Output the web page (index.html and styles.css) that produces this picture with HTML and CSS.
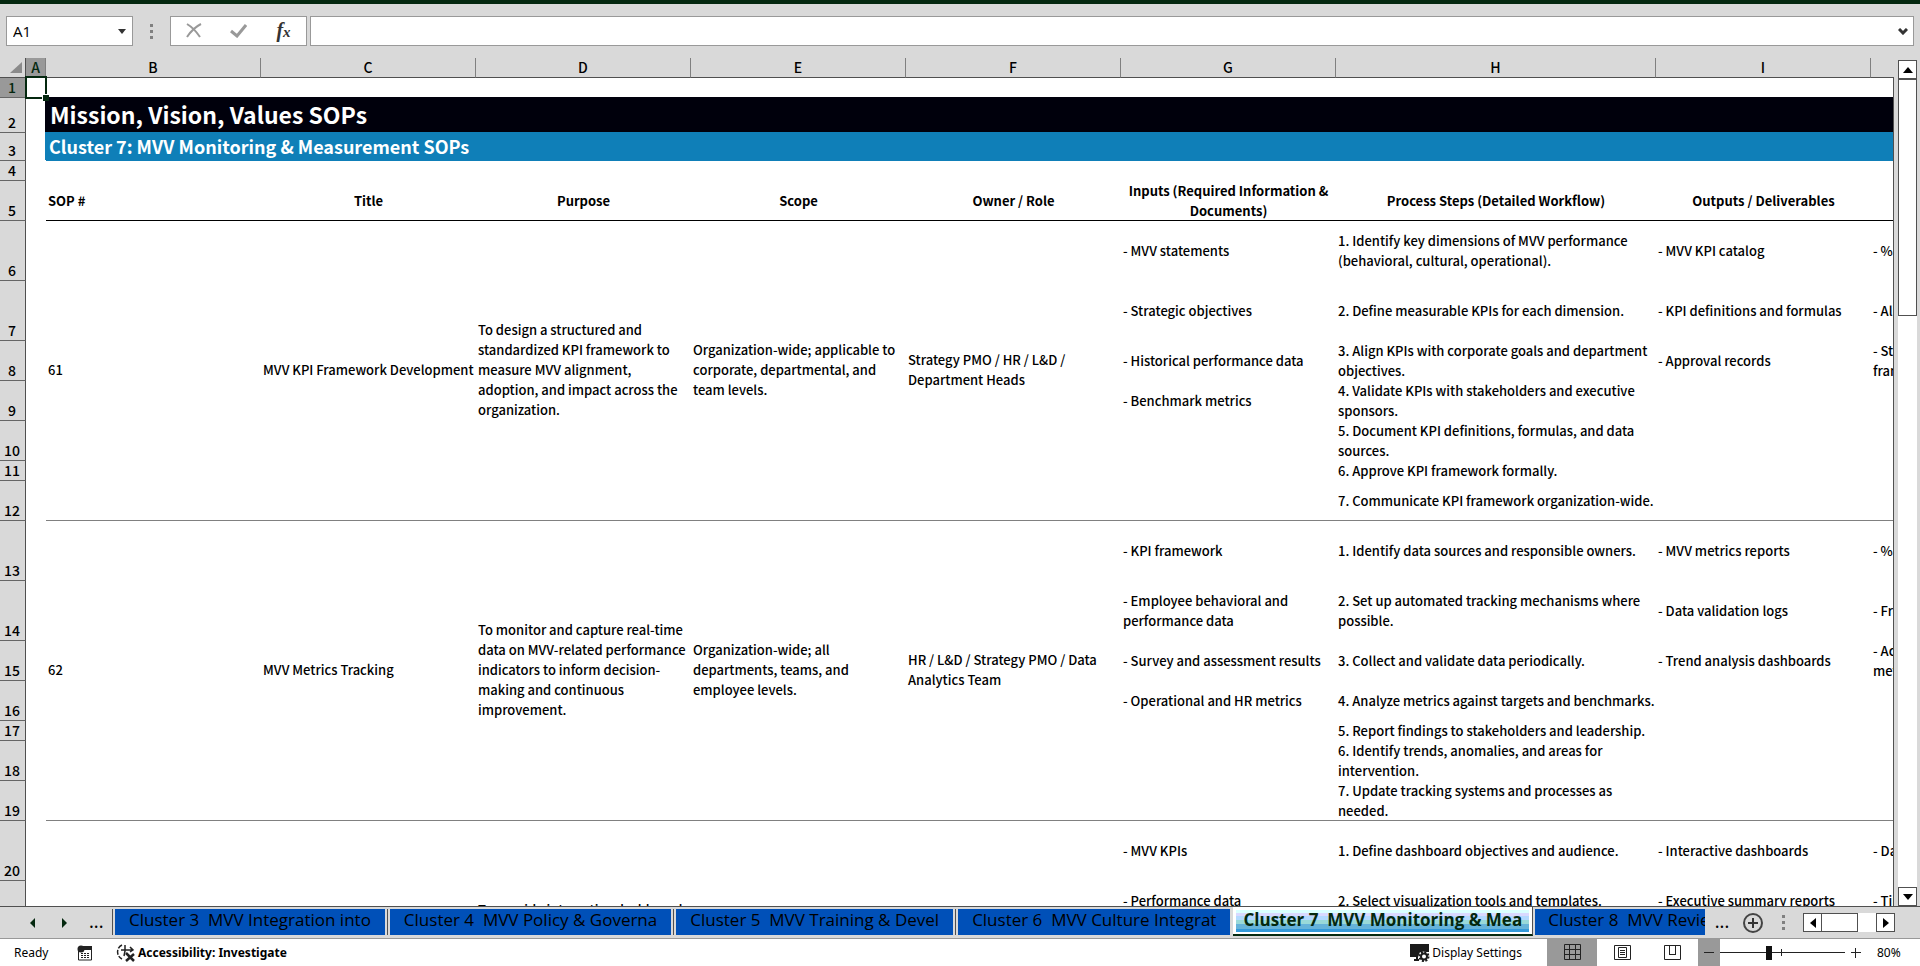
FILE: index.html
```html
<!DOCTYPE html>
<html lang="en">
<head>
    <meta charset="UTF-8">
    <meta name="viewport" content="width=device-width, initial-scale=1.0">
    <title>Mission, Vision, Values SOPs</title>
    <link rel="stylesheet" href="styles.css">
</head>
<body>
    <header class="title-strip"></header>

    <!-- Formula bar -->
    <div class="formula-bar">
        <div class="name-box">
            <input type="text" class="name-input" value="A1" aria-label="Name box">
            <button class="drop-btn" aria-label="Open name list">
                <svg width="8" height="5" viewBox="0 0 8 5"><path d="M0 0h8L4 5z" fill="#333"/></svg>
            </button>
        </div>
        <span class="grip"><i></i><i></i><i></i></span>
        <div class="formula-actions">
            <button aria-label="Cancel">
                <svg width="16" height="16" viewBox="0 0 16 16"><path d="M1 1c5 3 9 7 13 13M15 1C9 4 5 8 1 14" fill="none" stroke="#999" stroke-width="2"/></svg>
            </button>
            <button aria-label="Enter">
                <svg width="17" height="14" viewBox="0 0 17 14"><path d="M1 7l6 5L16 1" fill="none" stroke="#999" stroke-width="3"/></svg>
            </button>
            <button class="fx" aria-label="Insert function">f<small>x</small></button>
        </div>
        <div class="formula-field">
            <input type="text" class="formula-input" aria-label="Formula">
            <button class="drop-btn" aria-label="Expand formula bar">
                <svg width="10" height="7" viewBox="0 0 10 7"><path d="M1 1l4 4 4-4" fill="none" stroke="#333" stroke-width="3"/></svg>
            </button>
        </div>
    </div>

    <!-- Worksheet -->
    <main class="sheet-area">
        <div class="sheet">
            <table class="grid">
                <colgroup>
                    <col class="col-num"><col class="col-a"><col class="col-std"><col class="col-std"><col class="col-std"><col class="col-std"><col class="col-std"><col class="col-std"><col class="col-wide"><col class="col-std"><col class="col-std">
                </colgroup>
                <thead>
                    <tr>
                        <th class="corner"><svg width="12" height="11" viewBox="0 0 12 11"><path d="M12 0v11H0z" fill="#8a8a8a"/></svg></th>
                        <th class="active">A</th><th>B</th><th>C</th><th>D</th><th>E</th><th>F</th><th>G</th><th>H</th><th>I</th><th>J</th>
                    </tr>
                </thead>
                <tbody>
                    <tr class="h20"><th class="active">1</th><td class="selected"><span class="cursor"></span></td><td colspan="9"></td></tr>
                    <tr class="h35"><th>2</th><td></td><td colspan="9" class="title">Mission, Vision, Values SOPs</td></tr>
                    <tr class="h28"><th>3</th><td></td><td colspan="9" class="subtitle">Cluster 7: MVV Monitoring &amp; Measurement SOPs</td></tr>
                    <tr class="h20"><th>4</th><td></td><td colspan="9"></td></tr>
                    <tr class="h40 heads">
                        <th>5</th><td></td>
                        <td class="left">SOP #</td>
                        <td>Title</td>
                        <td>Purpose</td>
                        <td>Scope</td>
                        <td>Owner / Role</td>
                        <td>Inputs (Required Information &amp;<br>Documents)</td>
                        <td>Process Steps (Detailed Workflow)</td>
                        <td>Outputs / Deliverables</td>
                        <td></td>
                    </tr>

                    <tr class="h60">
                        <th>6</th><td></td>
                        <td rowspan="7" class="end">61</td>
                        <td rowspan="7" class="end">MVV KPI Framework Development</td>
                        <td rowspan="7" class="end">To design a structured and<br>standardized KPI framework to<br>measure MVV alignment,<br>adoption, and impact across the<br>organization.</td>
                        <td rowspan="7" class="end">Organization-wide; applicable to<br>corporate, departmental, and<br>team levels.</td>
                        <td rowspan="7" class="end">Strategy PMO / HR / L&amp;D /<br>Department Heads</td>
                        <td>- MVV statements</td>
                        <td>1. Identify key dimensions of MVV performance<br>(behavioral, cultural, operational).</td>
                        <td>- MVV KPI catalog</td>
                        <td>- % of KPIs aligned</td>
                    </tr>
                    <tr class="h60"><th>7</th><td></td><td>- Strategic objectives</td><td>2. Define measurable KPIs for each dimension.</td><td>- KPI definitions and formulas</td><td>- Alignment score</td></tr>
                    <tr class="h40"><th>8</th><td></td><td>- Historical performance data</td><td>3. Align KPIs with corporate goals and department<br>objectives.</td><td>- Approval records</td><td>- Stakeholder approval of<br>framework</td></tr>
                    <tr class="h40"><th>9</th><td></td><td>- Benchmark metrics</td><td>4. Validate KPIs with stakeholders and executive<br>sponsors.</td><td></td><td></td></tr>
                    <tr class="h40"><th>10</th><td></td><td></td><td>5. Document KPI definitions, formulas, and data<br>sources.</td><td></td><td></td></tr>
                    <tr class="h20"><th>11</th><td></td><td></td><td>6. Approve KPI framework formally.</td><td></td><td></td></tr>
                    <tr class="h40 last"><th>12</th><td></td><td></td><td>7. Communicate KPI framework organization-wide.</td><td></td><td></td></tr>

                    <tr class="h60">
                        <th>13</th><td></td>
                        <td rowspan="7" class="end">62</td>
                        <td rowspan="7" class="end">MVV Metrics Tracking</td>
                        <td rowspan="7" class="end">To monitor and capture real-time<br>data on MVV-related performance<br>indicators to inform decision-<br>making and continuous<br>improvement.</td>
                        <td rowspan="7" class="end">Organization-wide; all<br>departments, teams, and<br>employee levels.</td>
                        <td rowspan="7" class="end">HR / L&amp;D / Strategy PMO / Data<br>Analytics Team</td>
                        <td>- KPI framework</td>
                        <td>1. Identify data sources and responsible owners.</td>
                        <td>- MVV metrics reports</td>
                        <td>- % of metrics captured</td>
                    </tr>
                    <tr class="h60"><th>14</th><td></td><td>- Employee behavioral and<br>performance data</td><td>2. Set up automated tracking mechanisms where<br>possible.</td><td>- Data validation logs</td><td>- Frequency of updates</td></tr>
                    <tr class="h40"><th>15</th><td></td><td>- Survey and assessment results</td><td>3. Collect and validate data periodically.</td><td>- Trend analysis dashboards</td><td>- Accuracy of reported<br>metrics</td></tr>
                    <tr class="h40"><th>16</th><td></td><td>- Operational and HR metrics</td><td>4. Analyze metrics against targets and benchmarks.</td><td></td><td></td></tr>
                    <tr class="h20"><th>17</th><td></td><td></td><td>5. Report findings to stakeholders and leadership.</td><td></td><td></td></tr>
                    <tr class="h40"><th>18</th><td></td><td></td><td>6. Identify trends, anomalies, and areas for<br>intervention.</td><td></td><td></td></tr>
                    <tr class="h40 last"><th>19</th><td></td><td></td><td>7. Update tracking systems and processes as<br>needed.</td><td></td><td></td></tr>

                    <tr class="h60">
                        <th>20</th><td></td>
                        <td rowspan="7" class="end">63</td>
                        <td rowspan="7" class="end">MVV Dashboards</td>
                        <td rowspan="7" class="end">To provide interactive dashboards<br>that give leaders and teams a<br>clear view of MVV performance,<br>highlight areas that need<br>attention, and support timely<br>decisions across the<br>organization.</td>
                        <td rowspan="7" class="end">Organization-wide.</td>
                        <td rowspan="7" class="end">Strategy PMO</td>
                        <td>- MVV KPIs</td>
                        <td>1. Define dashboard objectives and audience.</td>
                        <td>- Interactive dashboards</td>
                        <td>- Dashboard usage</td>
                    </tr>
                    <tr class="h40"><th>21</th><td></td><td>- Performance data</td><td>2. Select visualization tools and templates.</td><td>- Executive summary reports</td><td>- Timeliness of updates</td></tr>
                    <tr class="h40"><th>22</th><td></td><td></td><td></td><td></td><td></td></tr>
                    <tr class="h40"><th>23</th><td></td><td></td><td></td><td></td><td></td></tr>
                    <tr class="h40"><th>24</th><td></td><td></td><td></td><td></td><td></td></tr>
                    <tr class="h40"><th>25</th><td></td><td></td><td></td><td></td><td></td></tr>
                    <tr class="h40 last"><th>26</th><td></td><td></td><td></td><td></td><td></td></tr>
                </tbody>
            </table>
        </div>
        <div class="vscroll">
            <button class="scroll-btn" aria-label="Scroll up"><svg width="10" height="6" viewBox="0 0 10 6"><path d="M5 0l5 6H0z"/></svg></button>
            <div class="vthumb"></div>
            <button class="scroll-btn bottom" aria-label="Scroll down"><svg width="10" height="6" viewBox="0 0 10 6"><path d="M0 0h10L5 6z"/></svg></button>
        </div>
    </main>

    <!-- Sheet tabs -->
    <nav class="tab-bar">
        <div class="tab-nav">
            <button aria-label="Previous sheet"><svg width="5" height="10" viewBox="0 0 5 10"><path d="M5 0v10L0 5z" fill="#04280f"/></svg></button>
            <button aria-label="Next sheet"><svg width="5" height="10" viewBox="0 0 5 10"><path d="M0 0v10l5-5z" fill="#04280f"/></svg></button>
            <button class="more" aria-label="Earlier sheets">...</button>
        </div>
        <div class="tabs">
            <button class="tab">Cluster 3  MVV Integration into</button>
            <button class="tab">Cluster 4  MVV Policy &amp; Governa</button>
            <button class="tab">Cluster 5  MVV Training &amp; Devel</button>
            <button class="tab">Cluster 6  MVV Culture Integrat</button>
            <button class="tab current"><span>Cluster 7  MVV Monitoring &amp; Mea</span></button>
            <button class="tab">Cluster 8  MVV Review &amp; Improv</button>
        </div>
        <div class="tab-tools">
            <button class="more" aria-label="Later sheets">...</button>
            <button aria-label="New sheet">
                <svg width="22" height="22" viewBox="0 0 22 22"><circle cx="11" cy="11" r="9" fill="none" stroke="#444" stroke-width="2"/><path d="M6 11h10M11 6v10" stroke="#333" stroke-width="2"/></svg>
            </button>
            <span class="grip"><i></i><i></i><i></i></span>
            <div class="hscroll">
                <button class="scroll-btn" aria-label="Scroll left"><svg width="6" height="10" viewBox="0 0 6 10"><path d="M6 0v10L0 5z"/></svg></button>
                <div class="hthumb"></div>
                <button class="scroll-btn right" aria-label="Scroll right"><svg width="6" height="10" viewBox="0 0 6 10"><path d="M0 0v10l6-5z"/></svg></button>
            </div>
        </div>
    </nav>

    <!-- Status bar -->
    <footer class="status-bar">
        <span class="ready">Ready</span>
        <button class="macro" aria-label="Record macro">
            <svg width="16" height="16" viewBox="0 0 16 16"><path d="M1.500 5v10h13V2H6" fill="none" stroke="#222"/><path d="M6 1h9v4H6z" fill="#222"/><circle cx="4" cy="4" r="3.500" fill="#222"/><path d="M4 8.500h9M4 10.500h9M4 12.500h9" stroke="#222" stroke-dasharray="2 1"/></svg>
        </button>
        <button class="access">
            <svg width="20" height="18" viewBox="0 0 20 18"><path d="M6 1C0 4 0 12 6 15" fill="none" stroke="#222" stroke-width="1.500" stroke-dasharray="5 1.500"/><path d="M5 6h12M9 1v6l-1 5M14 3l3 3-3 2" fill="none" stroke="#222" stroke-width="1.500"/><path d="M10 9l8 8M18 10l-8 7" stroke="#222" stroke-width="2.500"/></svg>
            Accessibility: Investigate
        </button>
        <button class="display">
            <svg width="20" height="18" viewBox="0 0 20 18"><path d="M0 0h19v8h-9l-2 5H0z" fill="#1a1a1a"/><path d="M4 16h5M7 13v3" stroke="#1a1a1a" stroke-width="2"/><circle cx="14" cy="12.500" r="5" fill="#fff"/><circle cx="14" cy="12.500" r="3" fill="none" stroke="#1a1a1a" stroke-width="2"/><circle cx="14" cy="12.500" r="4.500" fill="none" stroke="#1a1a1a" stroke-width="2" stroke-dasharray="2 1.500"/></svg>
            Display Settings
        </button>
        <div class="views">
            <button class="on" aria-label="Normal view"><svg width="17" height="17" viewBox="0 0 17 17"><path d="M.5.5h16v15H.5zM5.500 0v16M11.500 0v16M0 5.500h17M0 10.500h17" fill="none" stroke="#222"/></svg></button>
            <button aria-label="Page layout"><svg width="17" height="16" viewBox="0 0 17 16"><path d="M.5.500h16v14H.5zM4.500 2.500h8v10h-8zM6 5.500h5M6 7.500h5M6 9.500h5" fill="none" stroke="#222"/></svg></button>
            <button aria-label="Page break preview"><svg width="17" height="16" viewBox="0 0 17 16"><path d="M.5.500h16v14H.5zM5.500 0v9.500M11.500 0v9.500M5 9.500h7" fill="none" stroke="#222"/></svg></button>
        </div>
        <button class="zoom-out" aria-label="Zoom out"><svg width="10" height="10" viewBox="0 0 10 10"><path d="M0 4.500h10" stroke="#222"/></svg></button>
        <input type="range" class="zoom" min="0" max="100" value="39" aria-label="Zoom">
        <button class="zoom-in" aria-label="Zoom in"><svg width="10" height="10" viewBox="0 0 10 10"><path d="M0 4.500h10M4.500 0v10" stroke="#222"/></svg></button>
        <span class="percent">80%</span>
    </footer>
</body>
</html>
```
FILE: styles.css
```css
* {
    box-sizing: border-box;
}
body {
    margin: 0;
    height: 100vh;
    display: flex;
    flex-direction: column;
    overflow: hidden;
    background-color: #d9d9d9;
    color: #000;
    font-family: "Noto Sans", sans-serif;
    font-size: 12px;
}
button {
    display: flex;
    align-items: center;
    justify-content: center;
    border: none;
    padding: 0;
    background: none;
    color: inherit;
    font: inherit;
    white-space: pre;
}
input {
    border: none;
    padding: 0;
    margin: 0;
    background: none;
    outline: none;
}
.title-strip {
    height: 4px;
    flex: none;
    background-color: #04280f;
}

/* Formula bar */
.formula-bar {
    display: flex;
    flex: none;
    height: 54px;
    padding: 12px 6px;
}
.name-box,
.formula-actions,
.formula-field {
    display: flex;
    align-items: center;
    background-color: white;
    border: 1px solid #999;
}
.name-box {
    width: 127px;
    padding: 0 6px;
}
.name-input {
    flex: 1;
    min-width: 0;
    font-family: "Open Sans", sans-serif;
    font-size: 15px;
}
.grip {
    display: flex;
    flex-direction: column;
    justify-content: center;
    align-items: center;
    gap: 3px;
    width: 37px;
}
.grip i {
    width: 3px;
    height: 3px;
    background-color: #808080;
}
.formula-actions {
    width: 137px;
    margin-right: 3px;
}
.formula-actions button {
    flex: 1;
}
.formula-actions .fx {
    align-items: baseline;
    font: italic bold 20px/24px "Liberation Serif", serif;
    color: #333;
}
.fx small {
    font-size: 15px;
}
.formula-field {
    flex: 1;
    padding: 0 5px;
}
.formula-input {
    flex: 1;
    font-size: 14px;
}

/* Worksheet */
.sheet-area {
    display: flex;
    flex: 1;
    min-height: 0;
    padding-right: 3px;
}
.sheet {
    position: relative;
    flex: 1;
    min-width: 0;
    overflow: hidden;
}
/* edge of the cell area, below the column letters */
.sheet::after {
    content: "";
    position: absolute;
    top: 19px;
    right: 0;
    bottom: 0;
    width: 4px;
    border-left: 1px solid #505050;
    background-color: #d9d9d9;
}
.grid {
    table-layout: fixed;
    width: 2086px;
    border-collapse: separate;
    border-spacing: 0;
    background-color: white;
    font-family: "Noto Sans CJK SC", sans-serif;
    font-size: 13px;
    font-weight: 500;
    line-height: 20px;
}
.col-num {
    width: 26px;
}
.col-a {
    width: 20px;
}
.col-std {
    width: 215px;
}
.col-wide {
    width: 320px;
}
.grid th {
    background-color: #d9d9d9;
    font-size: 14px;
    font-weight: 500;
    line-height: 16px;
}
.grid thead th {
    height: 20px;
    padding: 0 0 1px;
    border-right: 1px solid #808080;
    border-bottom: 1px solid #505050;
}
.grid .corner {
    border-right-color: #505050;
}
.corner svg {
    display: block;
    margin-left: 10px;
}
.grid tbody th {
    padding: 0 1px 2px 0;
    vertical-align: bottom;
    border-right: 1px solid #505050;
    border-bottom: 1px solid #666;
}
.grid th.active {
    background-color: #999;
    color: #04280f;
}
.grid td {
    padding: 0 2px;
    vertical-align: middle;
    white-space: nowrap;
}
.h20 {
    height: 20px;
}
.h28 {
    height: 28px;
}
.h35 {
    height: 35px;
}
.h40 {
    height: 40px;
}
.h60 {
    height: 60px;
}
.grid .title {
    padding: 0 4px 2px;
    background-color: #00000c;
    color: white;
    font-size: 23px;
    font-weight: bold;
    line-height: 33px;
    box-shadow: -1px -1px #00000c;
}
.grid .subtitle {
    padding: 0 3px 2px;
    background-color: #0f7fb8;
    color: white;
    font-size: 18px;
    font-weight: bold;
    line-height: 26px;
    box-shadow: -1px -1px #0f7fb8;
}
.heads td {
    font-weight: bold;
    text-align: center;
}
.heads .left {
    text-align: left;
}
.heads td + td {
    box-shadow: inset 0 -1px #000;
}
.last td + td,
.grid .end {
    box-shadow: inset 0 -1px #808080;
}
.grid .end {
    padding-bottom: 2px;
}
.selected {
    position: relative;
}
.cursor {
    position: absolute;
    top: -2px;
    left: -1px;
    right: -1px;
    bottom: -1px;
    border: 2px solid #04280f;
}
.cursor::after {
    content: "";
    position: absolute;
    right: -4px;
    bottom: -4px;
    width: 6px;
    height: 6px;
    border: 1px solid white;
    border-width: 1px 0 0 1px;
    background-color: #04280f;
}

/* Scroll bars */
.vscroll {
    display: flex;
    flex-direction: column;
    width: 19px;
    margin-top: 2px;
    background-color: white;
}
.scroll-btn {
    flex: none;
    width: 19px;
    height: 19px;
    border: 1px solid #505050;
    background-color: white;
}
.vthumb {
    height: 237px;
    border: 1px solid #505050;
}
.bottom {
    margin-top: auto;
}
.hscroll {
    display: flex;
    width: 92px;
    background-color: white;
}
.hthumb {
    width: 36px;
    border: 1px solid #505050;
    border-left: none;
}
.right {
    margin-left: auto;
}

/* Sheet tabs */
.tab-bar {
    display: flex;
    flex: none;
    height: 33px;
    border-top: 1px solid #505050;
    border-bottom: 1px solid #999;
}
.tab-nav {
    display: flex;
    align-items: center;
    gap: 27px;
    width: 112px;
    padding-left: 30px;
}
.more {
    font-size: 18px;
    line-height: 20px;
    padding-bottom: 4px;
}
.tab-nav .more {
    margin-left: -5px;
}
.tabs {
    display: flex;
    flex: 1;
    min-width: 0;
    overflow: hidden;
}
.tab {
    flex: none;
    height: 26px;
    margin: 2px 2px 0 3px;
    padding: 0 14px 5px;
    background-color: #0050b8;
    font-family: "Open Sans", sans-serif;
    font-size: 17px;
    line-height: 21px;
    box-shadow: -2px 0 #d9d9d9, -3px 0 #505050;
}
.tab.current {
    height: 29px;
    margin: 0 0 0 1px;
    padding: 3px 3px 2px;
    background-color: white;
    border-bottom: 2px solid #04280f;
    border-right: 1px solid #505050;
    box-shadow: none;
    color: #04280f;
    font-weight: bold;
}
.tab.current span {
    height: 22px;
    padding: 0 7px;
    line-height: 20px;
    background: linear-gradient(#d9ffff 0 3px, #d9d9ff 3px 6px, #b3d9ff 6px 10px, #99d9d9 10px 14px, #66b3d9 14px 19px, #3399d9 19px);
}
.tab.current + .tab {
    margin-left: 2px;
    padding-left: 13px;
    box-shadow: none;
}
.tab-tools {
    display: flex;
    flex: none;
    align-items: center;
    padding: 0 25px 0 9px;
}
.tab-tools .more {
    width: 16px;
    margin-right: 12px;
}
.tab-tools .grip {
    width: 39px;
    height: 20px;
}

/* Status bar */
.status-bar {
    display: flex;
    flex: none;
    align-items: center;
    height: 27px;
    background-color: white;
}
.status-bar button {
    height: 27px;
}
.ready {
    width: 77px;
    padding-left: 14px;
}
.macro {
    margin-right: 23px;
}
.access {
    font-weight: bold;
}
.status-bar .access,
.status-bar .display {
    gap: 2px;
    white-space: nowrap;
}
.display {
    margin-left: auto;
}
.views {
    display: flex;
    margin: 0 1px 0 25px;
}
.views button {
    width: 50px;
}
.status-bar .on,
.status-bar .zoom-out {
    background-color: #999;
}
.zoom-out {
    width: 22px;
}
.zoom {
    appearance: none;
    width: 125px;
    height: 14px;
    background:
        linear-gradient(#222, #222) 61px 50% / 1px 7px no-repeat,
        linear-gradient(#222, #222) 0 50% / 100% 1px no-repeat;
}
.zoom::-webkit-slider-thumb {
    appearance: none;
    width: 6px;
    height: 14px;
    background-color: #111;
}
.zoom-in {
    width: 22px;
}
.percent {
    width: 53px;
    padding-left: 10px;
}
```
